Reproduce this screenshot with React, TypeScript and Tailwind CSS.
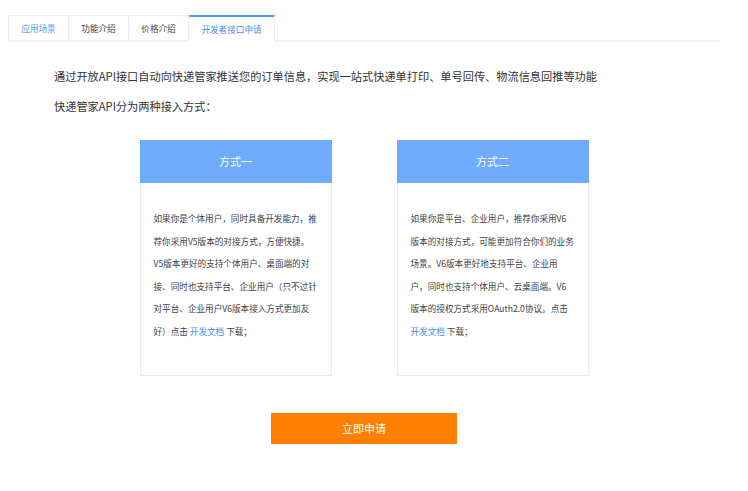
import React from "react";

const font = { fontFamily: '"Noto Sans CJK SC", "Noto Sans", sans-serif' };

function Tab({ label, active, blue }: { label: string; active?: boolean; blue?: boolean }) {
  return (
    <div
      className={
        "h-[25px] flex items-center justify-center text-[8.6px] border-r border-[#e9ecf0] " +
        (active
          ? "w-[86px] border-t-2 border-t-[#4a9bff] text-[#4a8ef0] bg-white h-[27px] -mb-[2px]"
          : "w-[60px] border-t border-t-[#eef0f3] " + (blue ? "text-[#5aa0ff]" : "text-[#444]"))
      }
    >
      {label}
    </div>
  );
}

function Card({ title, lines }: { title: string; lines: React.ReactNode[] }) {
  return (
    <div className="w-[192px] h-[236px] border border-[#ececec] bg-white flex flex-col">
      <div className="h-[43px] bg-[#70abff] flex items-center justify-center text-white text-[11px] -mx-px -mt-px">
        {title}
      </div>
      <div className="pt-[24px] px-[13px] text-[8.6px] text-[#444] leading-[22.6px]">
        {lines.map((l, i) => (
          <div key={i} className="whitespace-nowrap">
            {l}
          </div>
        ))}
      </div>
    </div>
  );
}

export default function App() {
  const link = (
    <span className="text-[#4a8ef0]">开发文档</span>
  );
  return (
    <div className="w-[748px] h-[491px] bg-white" style={font}>
      <div className="pl-[8px] pt-[15px] w-[720px]">
        <div className="flex border-b-2 border-[#f3f3f3] items-end">
          <div className="flex border-l border-[#e9ecf0]">
            <Tab label="应用场景" blue />
            <Tab label="功能介绍" />
            <Tab label="价格介绍" />
            <Tab label="开发者接口申请" active />
          </div>
        </div>
        <div className="pl-[46px] text-[11.2px] text-[#333]">
          <div className="mt-[26px] leading-[16px]">
            通过开放API接口自动向快递管家推送您的订单信息，实现一站式快递单打印、单号回传、物流信息回推等功能
          </div>
          <div className="mt-[14px] leading-[16px]">快递管家API分为两种接入方式：</div>
        </div>
        <div className="flex justify-center gap-[65px] mt-[26px]">
          <Card
            title="方式一"
            lines={[
              "如果你是个体用户，同时具备开发能力，推",
              "荐你采用V5版本的对接方式，方便快捷。",
              "V5版本更好的支持个体用户、桌面端的对",
              "接、同时也支持平台、企业用户（只不过针",
              "对平台、企业用户V6版本接入方式更加友",
              <>好）点击 {link} 下载；</>,
            ]}
          />
          <Card
            title="方式二"
            lines={[
              "如果你是平台、企业用户，推荐你采用V6",
              "版本的对接方式，可能更加符合你们的业务",
              "场景。V6版本更好地支持平台、企业用",
              "户，同时也支持个体用户、云桌面端。V6",
              "版本的授权方式采用OAuth2.0协议。点击",
              <>{link} 下载；</>,
            ]}
          />
        </div>
        <div className="flex justify-center mt-[37px]">
          <button className="w-[186px] h-[31px] bg-[#ff8000] text-white text-[11px] flex items-center justify-center">
            立即申请
          </button>
        </div>
      </div>
    </div>
  );
}
